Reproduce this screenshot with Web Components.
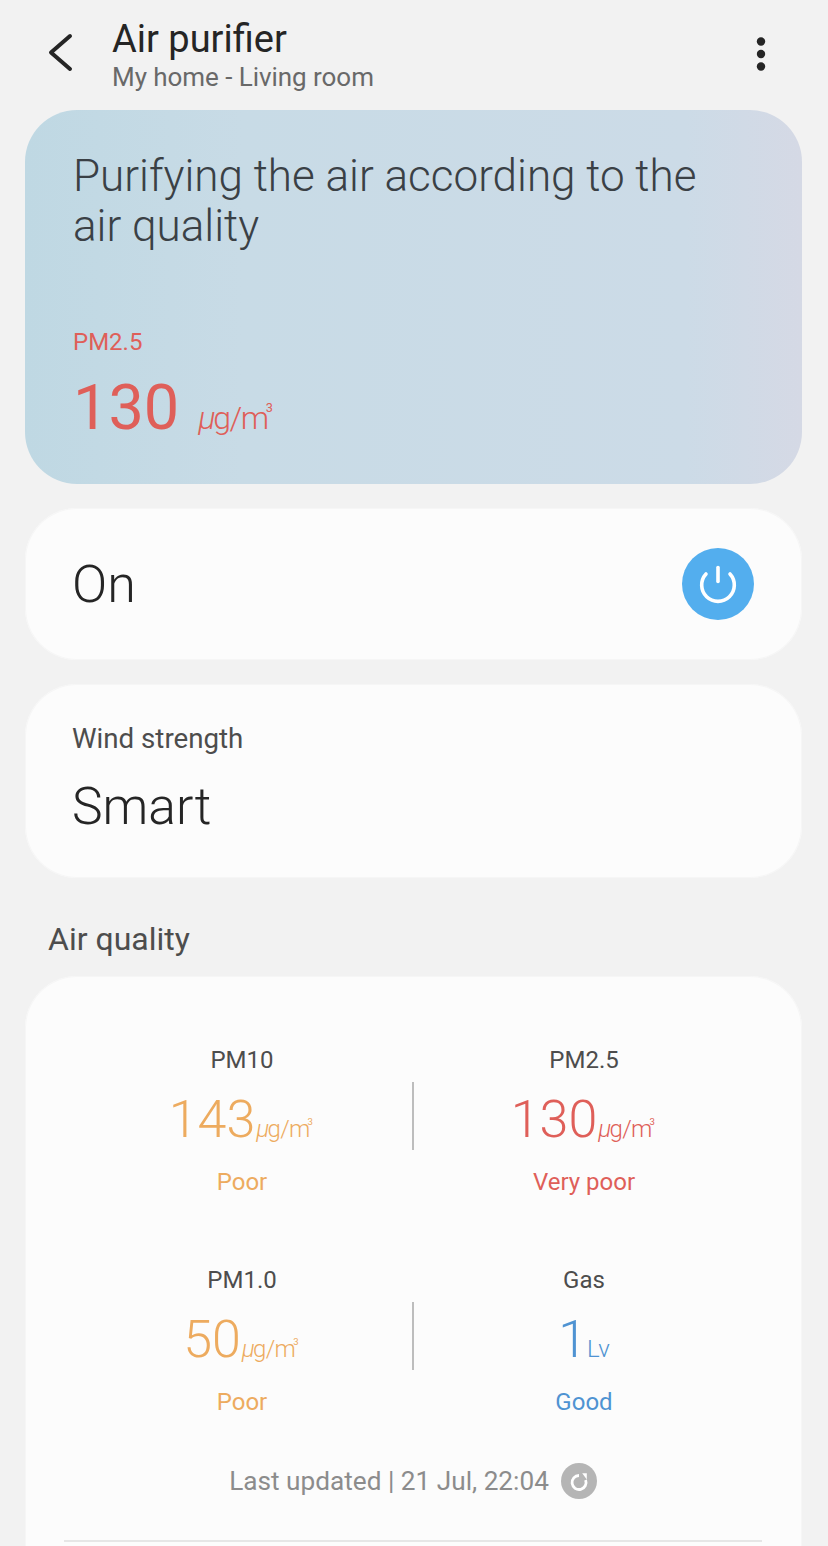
<!DOCTYPE html>
<html>
<head>
<meta charset="utf-8">
<title>Air purifier</title>
<style>
  html, body { margin: 0; padding: 0; height: 1546px; overflow: hidden; background: #f2f2f2; }
  body { font-family: Roboto, "Liberation Sans", sans-serif; }
  .stack { display: flex; flex-direction: column; gap: 24px; padding: 0 26px 0 25px; }
</style>
</head>
<body>
  <app-header title="Air purifier" sub="My home - Living room"></app-header>
  <div class="stack">
    <status-card text="Purifying the air according to the air quality" label="PM2.5" value="130"></status-card>
    <power-card label="On"></power-card>
    <wind-card label="Wind strength" value="Smart"></wind-card>
  </div>
  <section-title>Air quality</section-title>
  <div class="stack">
    <quality-card updated="Last updated | 21 Jul, 22:04">
      <quality-cell label="PM10" value="143" state="Poor" color="#edab5f"></quality-cell>
      <quality-cell label="PM2.5" value="130" state="Very poor" color="#df5f59"></quality-cell>
      <quality-cell label="PM1.0" value="50" state="Poor" color="#edab5f"></quality-cell>
      <quality-cell label="Gas" value="1" state="Good" unit="Lv" color="#4f93d2"></quality-cell>
    </quality-card>
  </div>

<script>
  // small helper so every element gets an open shadow root with its markup
  class Base extends HTMLElement {
    constructor() {
      super();
      this.attachShadow({ mode: 'open' });
    }
    attr(name, fallback = '') {
      return this.getAttribute(name) || fallback;
    }
  }

  const unitMarkup = `<span class="mu">μ</span>g<span class="slash">/</span>m<span class="cube">3</span>`;
  const unitStyle = `
    .mu { font-style: italic; }
    .slash { margin: 0 1px; }
    .cube { font-size: 0.4em; font-weight: 400; vertical-align: 1.3em; margin-left: -1px; line-height: 0; }
  `;

  class AppHeader extends Base {
    connectedCallback() {
      this.shadowRoot.innerHTML = `
        <style>
          :host { display: flex; align-items: center; height: 110px; box-sizing: border-box; padding: 0 60px 0 46px; }
          .back { width: 28px; height: 40px; flex: none; margin-right: 38px; margin-top: -4px; }
          .titles { flex: 1; }
          .title { font-size: 38px; line-height: 44px; color: #252525; }
          .sub { font-size: 26px; line-height: 32px; color: #696969; letter-spacing: -0.05px; }
          .more { width: 14px; height: 36px; flex: none; margin-top: -2px; }
        </style>
        <svg class="back" viewBox="0 0 28 40"><path d="M24 3 L5 19.5 L24 36" fill="none" stroke="#252525" stroke-width="4" stroke-linecap="round" stroke-linejoin="round"/></svg>
        <div class="titles">
          <div class="title">${this.attr('title')}</div>
          <div class="sub">${this.attr('sub')}</div>
        </div>
        <svg class="more" viewBox="0 0 14 36"><circle cx="7" cy="5.5" r="4.2" fill="#252525"/><circle cx="7" cy="18" r="4.2" fill="#252525"/><circle cx="7" cy="30.5" r="4.2" fill="#252525"/></svg>
      `;
    }
  }

  class StatusCard extends Base {
    connectedCallback() {
      this.shadowRoot.innerHTML = `
        <style>
          :host { display: block; height: 374px; box-sizing: border-box; padding: 41px 48px 0; border-radius: 52px;
            background: linear-gradient(90deg, #bfd8e3 0%, #c8dbe6 28%, #ccdbe7 85%, #d5d9e5 100%); }
          .text { font-size: 44px; font-weight: 300; line-height: 50px; color: #3a4045; height: 176px; margin-right: 40px; }
          .label { font-size: 24px; line-height: 30px; color: #df5f59; }
          .row { display: flex; align-items: baseline; margin-top: 13px; color: #df5f59; }
          .value { font-size: 63px; line-height: 76px; font-weight: 400; }
          .unit { font-size: 32px; font-weight: 300; margin-left: 19px; letter-spacing: -2.4px; }
          ${unitStyle}
        </style>
        <div class="text">${this.attr('text')}</div>
        <div class="label">${this.attr('label')}</div>
        <div class="row"><span class="value">${this.attr('value')}</span><span class="unit">${unitMarkup}</span></div>
      `;
    }
  }

  class PowerCard extends Base {
    connectedCallback() {
      this.shadowRoot.innerHTML = `
        <style>
          :host { display: flex; align-items: center; justify-content: space-between; height: 152px; box-sizing: border-box;
            padding: 0 48px 0 47px; border-radius: 52px; background: #fcfcfc; box-shadow: 0 0 0 1px #f6f6f6 inset; }
          .label { font-size: 52px; font-weight: 300; color: #252525; }
          .btn { width: 72px; height: 72px; border-radius: 50%; background: #53aeee; display: flex; align-items: center; justify-content: center; }
          svg { width: 40px; height: 40px; }
        </style>
        <span class="label">${this.attr('label')}</span>
        <span class="btn"><svg viewBox="0 0 40 40"><path d="M8 10 A16.3 16.3 0 1 0 32 10" fill="none" stroke="#fff" stroke-width="3.6" stroke-linecap="round"/><path d="M20 3.5 V17.5" fill="none" stroke="#fff" stroke-width="3.6" stroke-linecap="round"/></svg></span>
      `;
    }
  }

  class WindCard extends Base {
    connectedCallback() {
      this.shadowRoot.innerHTML = `
        <style>
          :host { display: block; height: 194px; box-sizing: border-box; padding: 38px 47px 0; border-radius: 52px;
            background: #fcfcfc; box-shadow: 0 0 0 1px #f6f6f6 inset; }
          .label { font-size: 27.7px; line-height: 34px; color: #4d4d4d; }
          .value { font-size: 51.6px; font-weight: 300; line-height: 60px; color: #252525; margin-top: 21px; }
        </style>
        <div class="label">${this.attr('label')}</div>
        <div class="value">${this.attr('value')}</div>
      `;
    }
  }

  class SectionTitle extends Base {
    connectedCallback() {
      this.shadowRoot.innerHTML = `
        <style>
          :host { display: block; height: 98px; box-sizing: border-box; padding: 42px 0 0 48px; font-size: 32px; line-height: 38px; color: #4d4d4d; }
        </style>
        <slot></slot>
      `;
    }
  }

  class QualityCard extends Base {
    connectedCallback() {
      this.shadowRoot.innerHTML = `
        <style>
          :host { display: block; box-sizing: border-box; height: 620px; padding: 70px 47px 0 46px; border-radius: 52px 52px 0 0;
            background: #fcfcfc; box-shadow: 0 0 0 1px #f6f6f6 inset; }
          .grid { display: grid; grid-template-columns: 1fr 1fr; grid-auto-rows: 140px; row-gap: 80px; }
          .updated { display: flex; align-items: center; justify-content: center; gap: 12px; margin-top: 57px; font-size: 26.2px; line-height: 36px; color: #8c8c8c; }
          .refresh { width: 36px; height: 36px; border-radius: 50%; background: #b5b5b5; display: flex; align-items: center; justify-content: center; }
          .refresh svg { width: 22px; height: 22px; }
          hr { border: 0; height: 2px; background: #e6e6e6; margin: 41px -7px 0; }
        </style>
        <div class="grid"><slot></slot></div>
        <div class="updated"><span>${this.attr('updated')}</span>
          <span class="refresh"><svg viewBox="0 0 22 22"><path d="M11 5.5 A7 7 0 1 0 17.6 10" fill="none" stroke="#fff" stroke-width="2.8"/><path d="M14.2 3.2 L18.8 3.2 L18.8 9.6 Z" fill="#fff"/></svg></span>
        </div>
        <hr>
      `;
    }
  }

  class QualityCell extends Base {
    connectedCallback() {
      const unit = this.getAttribute('unit');
      // the rule sits on the right of the first cell of each row
      const index = [...this.parentNode.children].indexOf(this);
      this.shadowRoot.innerHTML = `
        <style>
          :host { display: block; position: relative; text-align: center; color: ${this.attr('color')}; height: 140px; }
          .label { font-size: 24px; line-height: 28px; color: #4d4d4d; }
          .row { display: flex; justify-content: center; align-items: baseline; height: 64px; margin-top: 14px; }
          .value { font-size: 52px; font-weight: 300; line-height: 64px; }
          .unit { font-size: 24px; font-weight: 300; margin: 0 4px 0 1px; letter-spacing: -1.7px; }
          .lv { margin: 0 -4px 0 -1px; display: inline-block; letter-spacing: 0; }
          .state { font-size: 24px; line-height: 30px; margin-top: 15px; }
          .rule { position: absolute; right: -1px; top: 36px; width: 2px; height: 68px; background: #bdbdbd; }
          ${unitStyle}
          .slash { margin: 0 1px; }
        </style>
        <div class="label">${this.attr('label')}</div>
        <div class="row"><span class="value">${this.attr('value')}</span><span class="unit">${unit ? `<span class="lv">${unit}</span>` : unitMarkup}</span></div>
        <div class="state">${this.attr('state')}</div>
        ${index % 2 === 0 ? '<div class="rule"></div>' : ''}
      `;
    }
  }

  customElements.define('app-header', AppHeader);
  customElements.define('status-card', StatusCard);
  customElements.define('power-card', PowerCard);
  customElements.define('wind-card', WindCard);
  customElements.define('section-title', SectionTitle);
  customElements.define('quality-card', QualityCard);
  customElements.define('quality-cell', QualityCell);
</script>
</body>
</html>
